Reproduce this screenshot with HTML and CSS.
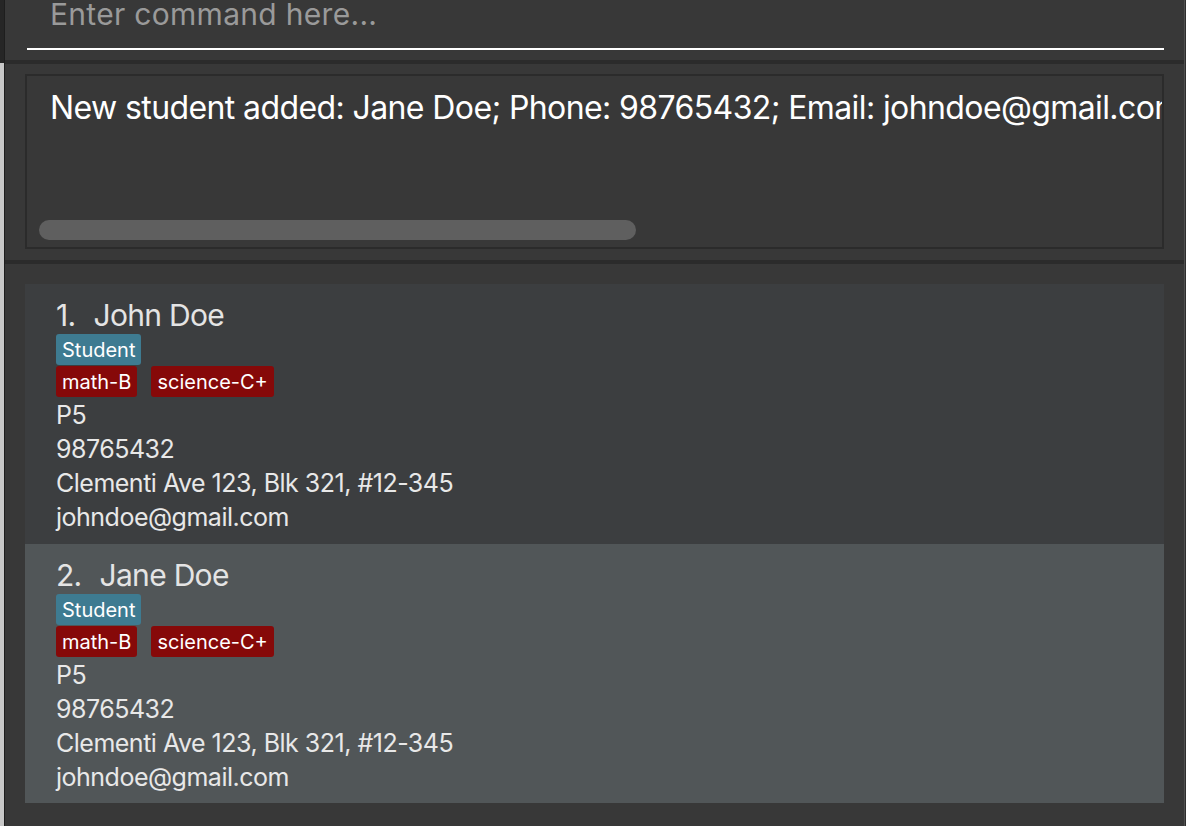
FILE: index.html
```html
<!DOCTYPE html>
<html lang="en">
<head>
<meta charset="utf-8">
<title>Student list</title>
<link rel="stylesheet" href="styles.css">
</head>
<body>
<div class="screen">
  <div class="edge">
    <div class="edge-top"></div>
    <div class="edge-bottom"></div>
  </div>
  <div class="app">
    <div class="command">
      <div class="command-field"><span class="placeholder">Enter command here...</span></div>
    </div>
    <div class="split"></div>
    <div class="result-pane">
      <div class="result-box">
        <div class="result-text">New student added: Jane Doe; Phone: 98765432; Email: johndoe@gmail.com; Address: Clementi Ave 123, Blk 321, #12-345; Level: P5; Tags: [math-B][science-C+]</div>
        <div class="hscroll"></div>
      </div>
    </div>
    <div class="split"></div>
    <div class="list">
      <div class="card">
        <div class="name"><span class="idx">1.</span>John Doe</div>
        <div class="tag-row"><span class="tag role">Student</span></div>
        <div class="tag-row"><span class="tag grade">math-B</span><span class="tag grade">science-C+</span></div>
        <div class="line">P5</div>
        <div class="line">98765432</div>
        <div class="line">Clementi Ave 123, Blk 321, #12-345</div>
        <div class="line">johndoe@gmail.com</div>
      </div>
      <div class="card selected">
        <div class="name"><span class="idx">2.</span>Jane Doe</div>
        <div class="tag-row"><span class="tag role">Student</span></div>
        <div class="tag-row"><span class="tag grade">math-B</span><span class="tag grade">science-C+</span></div>
        <div class="line">P5</div>
        <div class="line">98765432</div>
        <div class="line">Clementi Ave 123, Blk 321, #12-345</div>
        <div class="line">johndoe@gmail.com</div>
      </div>
    </div>
  </div>
  <div class="rim"></div>
</div>
</body>
</html>
```

FILE: styles.css
```css
* { box-sizing: border-box; }
html, body {
  margin: 0;
  padding: 0;
  width: 1186px;
  height: 826px;
  overflow: hidden;
  background: #383838;
  font-family: "Inter", "Open Sans", sans-serif;
}
.screen {
  display: flex;
  width: 1186px;
  height: 826px;
}
.edge {
  flex: none;
  width: 5px;
  display: flex;
  flex-direction: column;
  border-right: 1px solid #1e1e1e;
}
.edge-top {
  height: 63px;
  background: #262626;
}
.edge-bottom {
  flex: 1;
  background: #c8c8c8;
}
.app {
  flex: 1;
  min-width: 0;
  overflow: hidden;
  display: flex;
  flex-direction: column;
  background: #383838;
}
.rim {
  flex: none;
  width: 2px;
  background: #2e2e2e;
  border-left: 1px solid #505050;
}
.command {
  height: 60px;
  padding: 0 20px 0 22px;
}
.command-field {
  height: 50px;
  border-bottom: 2px solid #ffffff;
  padding-left: 23px;
  overflow: hidden;
}
.placeholder {
  display: block;
  font-size: 30px;
  line-height: 30px;
  letter-spacing: 0.3px;
  margin-top: -1px;
  color: #9a9a9a;
  white-space: nowrap;
}
.split {
  height: 4px;
  background: #2b2b2b;
}
.result-pane {
  height: 196px;
  padding: 10px 20px 0 20px;
}
.result-box {
  height: 175px;
  border: 2px solid #2b2b2b;
  display: flex;
  flex-direction: column;
  padding: 12px 0 7px 0;
  overflow: hidden;
}
.result-text {
  padding-left: 23px;
  font-size: 32px;
  line-height: 40px;
  letter-spacing: -0.6px;
  color: #ffffff;
  white-space: nowrap;
  overflow: hidden;
}
.hscroll {
  flex: none;
  margin-top: auto;
  margin-left: 12px;
  width: 597px;
  height: 20px;
  border-radius: 10px;
  background: #5f5f5f;
}
.list {
  flex: 1;
  padding: 20px 20px 0 20px;
}
.card {
  background: #3c3e40;
  padding: 13px 0 10px 31px;
  height: 260px;
}
.card.selected {
  background: #515658;
  height: 259px;
}
.name {
  font-size: 30px;
  line-height: 36px;
  letter-spacing: -0.7px;
  color: #e4e4e4;
  white-space: nowrap;
}
.idx {
  margin-right: 18px;
}
.tag-row {
  display: flex;
  gap: 14px;
  margin-top: 1px;
}
.tag {
  height: 31px;
  padding: 1px 6px 0 6px;
  font-size: 20px;
  line-height: 30px;
  color: #ffffff;
  border-radius: 3px;
}
.tag.role { background: #3e7b91; }
.tag.grade { background: #860909; }
.line {
  font-size: 25px;
  line-height: 34px;
  letter-spacing: -0.5px;
  color: #e8e8e8;
  white-space: nowrap;
}
.tag-row + .line { margin-top: 1px; }
```
